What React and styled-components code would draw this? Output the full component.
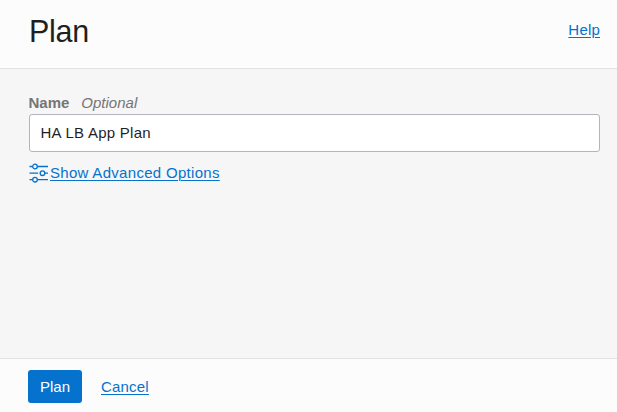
import React from "react";
import styled, { createGlobalStyle } from "styled-components";

const GlobalStyle = createGlobalStyle`
  *, *::before, *::after { box-sizing: border-box; }
  body { margin: 0; font-family: "Liberation Sans", Helvetica, Arial, sans-serif; color: #1f1f1f; }
`;

const Panel = styled.section`
  display: flex;
  flex-direction: column;
  height: 100vh;
  background: #f6f6f6;
`;

const Header = styled.header`
  display: flex;
  align-items: center;
  justify-content: space-between;
  height: 69px;
  padding: 0 17px 8px 29px;
  background: #fcfcfc;
  border-bottom: 1px solid #e2e2e2;
`;

const Title = styled.h1`
  margin: 0;
  padding-top: 2px;
  font-size: 30.5px;
  line-height: 36px;
  font-weight: 400;
  letter-spacing: -0.3px;
`;

const Link = styled.a`
  color: #0572ce;
  font-size: 15px;
  line-height: 20px;
  letter-spacing: ${({ $tracking }) => $tracking || "0.2px"};
  text-decoration: underline;
  text-underline-offset: 2px;
  text-decoration-thickness: 1px;
  white-space: nowrap;
`;

const Body = styled.form`
  flex: 1;
  padding: 24px 17px 0 29px;
`;

const Label = styled.label`
  display: flex;
  gap: 12px;
  height: 21px;
  margin-left: -0.5px;
  font-size: 15px;
  line-height: 20px;
  font-weight: 700;
  color: #757575;
`;

const Hint = styled.em`
  font-weight: 400;
`;

const Input = styled.input`
  display: block;
  width: 100%;
  height: 38px;
  padding: 0 11px 2px 10.5px;
  border: 1px solid #b3b5be;
  border-radius: 3px;
  background: #fff;
  color: #1f1f1f;
  font: 15px "Liberation Sans", Helvetica, Arial, sans-serif;
  letter-spacing: 0.26px;
  outline: none;
`;

const Advanced = styled.div`
  display: flex;
  align-items: center;
  gap: 1px;
  margin-top: 11px;
`;

const Icon = styled.svg`
  flex: none;
  color: #0572ce;
`;

const Footer = styled.footer`
  display: flex;
  align-items: center;
  gap: 19px;
  height: 54px;
  padding: 2px 28px 0;
  background: #fcfcfc;
  border-top: 1px solid #e2e2e2;
`;

const Button = styled.button`
  width: 54px;
  height: 33px;
  padding: 0;
  border: 0;
  border-radius: 3px;
  background: #0572ce;
  color: #fff;
  font: 15px "Liberation Sans", Helvetica, Arial, sans-serif;
`;

function SlidersIcon() {
  return (
    <Icon width="20" height="20" viewBox="0 0 20 20" fill="none" stroke="currentColor" strokeWidth="1.3" aria-hidden="true">
      <path d="M0.5 3.5H3.7M8.3 3.5H19M0.5 10.2H9.2M15.8 10.2H19M0.5 16.7H3.7M8.3 16.7H19" />
      <circle cx="6" cy="3.5" r="2.3" />
      <circle cx="13.5" cy="10.2" r="2.3" />
      <circle cx="6" cy="16.7" r="2.3" />
    </Icon>
  );
}

export default function App() {
  return (
    <>
      <GlobalStyle />
      <Panel>
        <Header>
          <Title>Plan</Title>
          <Link href="#help">Help</Link>
        </Header>
        <Body>
          <Label htmlFor="name">Name <Hint>Optional</Hint></Label>
          <Input id="name" defaultValue="HA LB App Plan" />
          <Advanced>
            <SlidersIcon />
            <Link href="#advanced" $tracking="0.3px">Show Advanced Options</Link>
          </Advanced>
        </Body>
        <Footer>
          <Button type="button">Plan</Button>
          <Link href="#cancel">Cancel</Link>
        </Footer>
      </Panel>
    </>
  );
}
